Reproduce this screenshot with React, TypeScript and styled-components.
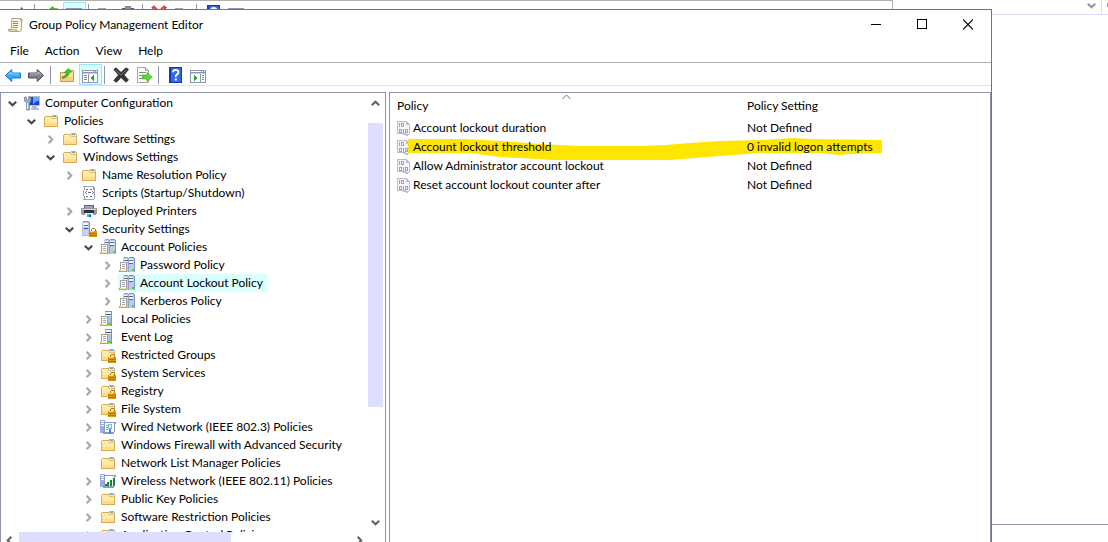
import React from "react";
import styled, { createGlobalStyle, css } from "styled-components";

const colors = {
  accent: "#1090f0",
  frame: "#9292b2",
  beige: "#b2b2aa",
  lilac: "#dedeff",
  select: "#d9ffff",
  marker: "#ffe600",
};

const GlobalStyle = createGlobalStyle`
  *, *::before, *::after { box-sizing: border-box; }
  body {
    margin: 0;
    background: #fff;
    color: #000;
    font: 12px/18px Lato, "Open Sans", sans-serif;
  }
  button { font: inherit; color: inherit; border: 0; padding: 0; background: none; }
  ul { list-style: none; margin: 0; padding: 0; }
  svg { display: block; flex: none; }
`;

/* ---------- layout ---------- */

const Desktop = styled.div`
  display: grid;
  grid-template-columns: minmax(0, 1fr) 116px;
  height: 100vh;
  overflow: hidden;
`;

const Stack = styled.div`
  display: flex;
  flex-direction: column;
  min-width: 0;
  min-height: 0;
`;

const BackStrip = styled.div`
  flex: none;
  height: 9px;
  overflow: hidden;
  margin-right: 99px;
  border-top: 1px solid ${colors.beige};
  border-right: 1px solid ${colors.beige};
`;

const Window = styled.main`
  flex: 1;
  display: flex;
  flex-direction: column;
  min-height: 0;
  margin-bottom: -7px;
  background: #fff;
  border-top: 1px solid ${colors.accent};
  border-right: 1px solid ${colors.accent};
`;

const TitleBar = styled.header`
  display: flex;
  align-items: center;
  height: 29px;
  padding-left: 8px;
`;

const Title = styled.h1`
  flex: 1;
  margin: 0 0 0 5px;
  font-size: 12px;
  font-weight: 400;
`;

const CaptionButton = styled.button`
  display: grid;
  place-items: center;
  width: 46px;
  height: 29px;
`;

const MenuBar = styled.nav`
  display: flex;
  gap: 16px;
  height: 24px;
  padding: 2px 10px 0;
  border-bottom: 1px solid ${colors.beige};
`;

const MenuButton = styled.button`
  height: 20px;
`;

const Toolbar = styled.div<{ $behind?: boolean }>`
  display: flex;
  height: 23px;
  padding: 1px 0 0 2px;
  border-bottom: 1px solid ${colors.lilac};
  ${(p) =>
    p.$behind &&
    css`
      padding-left: 9px;
      border: 0;
    `}
`;

const ToolButton = styled.button<{ $active?: boolean }>`
  display: flex;
  width: 23px;
  height: 21px;
  padding: 2px;
  border: 1px solid ${(p) => (p.$active ? "#99e6ff" : "transparent")};
  background: ${(p) => (p.$active ? colors.select : "transparent")};
`;

const Separator = styled.span`
  width: 8px;
  height: 20px;
  padding: 2px 0 0 2px;
  &::before {
    content: "";
    display: block;
    width: 1px;
    height: 100%;
    background: ${colors.frame};
  }
`;

const Panes = styled.div`
  flex: 1;
  display: grid;
  grid-template-columns: 386px minmax(0, 1fr);
  gap: 3px;
  min-height: 0;
  padding-top: 6px;
`;

const Pane = styled.section`
  min-width: 0;
  min-height: 0;
  border: 1px solid ${colors.frame};
  border-bottom: 0;
`;

const TreePane = styled(Pane)`
  display: grid;
  grid-template-columns: minmax(0, 1fr) 17px;
  grid-template-rows: minmax(0, 1fr) 17px;
`;

const TreeView = styled.div`
  overflow: hidden;
  padding: 1px 0 0 4px;
`;

const Branch = styled.ul`
  & & {
    padding-left: 19px;
  }
`;

const TreeRow = styled.div`
  display: flex;
  align-items: center;
  gap: 2px;
  height: 18px;
  white-space: nowrap;
`;

const Expander = styled.button`
  display: flex;
  width: 16px;
  height: 18px;
  padding: 5px 0 0 3px;
`;

const NodeLabel = styled.span<{ $selected?: boolean }>`
  display: flex;
  align-items: center;
  gap: 5px;
  height: 18px;
  padding: 0 4px 0 1px;
  background: ${(p) => (p.$selected ? colors.select : "transparent")};
`;

const VScroll = styled.div`
  display: flex;
  flex-direction: column;
  justify-content: space-between;
`;

const HScroll = styled.div`
  display: flex;
  justify-content: space-between;
`;

const ScrollButton = styled.button`
  display: flex;
  flex: none;
  width: 17px;
  height: 20px;
  padding: 6px 0 0 3px;
`;

const HScrollButton = styled(ScrollButton)`
  height: 17px;
  padding: 4px 0 0 4px;
`;

const VTrack = styled.div`
  flex: 1;
  padding: 10px 2px 0 0;
`;

const VThumb = styled.div`
  height: 73%;
  background: ${colors.lilac};
`;

const HTrack = styled.div`
  flex: 1;
  padding-left: 1px;
`;

const HThumb = styled.div`
  width: 64%;
  height: 17px;
  background: ${colors.lilac};
`;

const ListPane = styled(Pane)`
  position: relative;
`;

const SortMark = styled.span`
  position: absolute;
  top: 1px;
  left: 172px;
`;

const PolicyTable = styled.table`
  width: 100%;
  border-collapse: collapse;
  table-layout: fixed;

  th,
  td {
    padding: 0 0 0 7px;
    text-align: left;
    font-weight: 400;
    white-space: nowrap;
  }
  th {
    height: 25px;
  }
  td {
    height: 19px;
  }
  th:first-child {
    width: 350px;
  }
`;

const PolicyName = styled.span`
  position: relative;
  display: flex;
  align-items: center;
  gap: 2px;
  height: 19px;
`;

const CellText = styled.span`
  position: relative;
`;

const Marker = styled.svg`
  position: absolute;
  top: 0;
  left: 11px;
`;

const SideTop = styled.div`
  display: flex;
  flex: none;
  height: 15px;
  border-bottom: 1px solid ${colors.lilac};
`;

const SideDrop = styled.button`
  display: flex;
  justify-content: flex-end;
  flex: 1;
  padding: 1px 5px 0 0;
  border-right: 1px solid ${colors.lilac};
`;

const SideEdge = styled.span`
  width: 6px;
  padding: 3px 0 0 5px;
  &::before {
    content: "";
    display: block;
    height: 4px;
    background: ${colors.frame};
  }
`;

const SideBody = styled.div`
  flex: 1;
  margin-bottom: 17px;
  border-bottom: 1px solid ${colors.frame};
`;

/* ---------- icons ---------- */

type IconProps = { children: React.ReactNode; crisp?: boolean };
const Icon = ({ children, crisp = true }: IconProps) => (
  <svg width="16" height="16" viewBox="0 0 16 16" aria-hidden="true" shapeRendering={crisp ? "crispEdges" : "auto"}>
    {children}
  </svg>
);

type Dir = "down" | "right" | "left" | "up";
const angles: Record<Dir, number> = { down: 0, left: 90, up: 180, right: 270 };
const Chevron = ({ dir, color }: { dir: Dir; color: string }) => (
  <svg width="9" height="9" viewBox="0 0 9 9" aria-hidden="true">
    <path d="M.8 2.700 4.500 6.200 8.200 2.700" fill="none" stroke={color} strokeWidth="2.200" transform={`rotate(${angles[dir]} 4.500 4.500)`} />
  </svg>
);

const folderShape = (
  <>
    <path d="M1 4h1V3h7V2h5v1h1v11H1z" fill="#dcab50" />
    <path d="M2 5h7V3h5v10H2z" fill="#ffeaa8" />
    <path d="M2 4h6v1H2z" fill="#fff4cc" />
    <path d="M10 3h3v1h-3z" fill="#5aa0e0" />
    <path d="M9 5h5v1H9z" fill="#e8bf62" />
    <path d="M2 10h12v3H2z" fill="#ffdc8c" />
  </>
);

const lockShape = (
  <>
    <path d="M10 10V8h1V7h3v1h1v2h-1V8h-3v2z" fill="#a87a28" />
    <path d="M8 10h8v6H8z" fill="#e09a10" />
    <path d="M8 12h8v1H8zM8 14h8v1H8z" fill="#b87400" />
    <path d="M9 10h4v1H9z" fill="#ffd860" />
  </>
);

const serverShape = (
  <>
    <path d="M1 1h7v14H1z" fill="#b4c4e4" />
    <path d="M2 0h6v1H2zM8 1h1v14H8z" fill="#8296c4" />
    <path d="M2 2h5v2H2zM2 5h5v1H2z" fill="#f0f6ff" />
    <path d="M3 4h4v1H3zM3 7h4v1H3z" fill="#566890" />
    <path d="M2 9h5v5H2z" fill="#c6d6f2" />
  </>
);

const FolderIcon = () => <Icon>{folderShape}</Icon>;

const LockedFolderIcon = () => (
  <Icon>
    {folderShape}
    {lockShape}
  </Icon>
);

const LockedServerIcon = () => (
  <Icon>
    {serverShape}
    {lockShape}
  </Icon>
);

const paperShape = (
  <>
    <path d="M1 5h7v10H0v-2h1z" fill="#a8a090" />
    <path d="M2 6h5v7H2z" fill="#fffdf4" />
    <path d="M3 7h3v1H3zM3 9h3v1H3zM3 11h3v1H3z" fill="#9aa0c0" />
    <path d="M1 13h6v1H1z" fill="#ffe9a0" />
  </>
);

const PoliciesIcon = () => (
  <Icon>
    <path d="M4 1h5v14H4z" fill="#bccbe8" />
    <path d="M5 0h4v1H5zM9 1h1v14H9z" fill="#90a2cc" />
    <path d="M5 3h4v1H5z" fill="#566890" />
    <path d="M5 2h3v1H5zM5 4h3v1H5z" fill="#f4f8ff" />
    <path d="M10 1h5v14h-5z" fill="#bccbe8" />
    <path d="M10 0h5v1h-5zM15 1h1v14h-1z" fill="#8296c4" />
    <path d="M10 3h4v1h-4zM10 6h4v1h-4z" fill="#566890" />
    <path d="M10 2h4v1h-4zM10 4h4v2h-4z" fill="#f4f8ff" />
    <path d="M13 12h2v2h-2z" fill="#50d820" />
    {paperShape}
  </Icon>
);

const ServerPaperIcon = () => (
  <Icon>
    <path d="M5 1h7v14H5z" fill="#b0c0e0" />
    <path d="M5 0h7v1H5zM11 1h1v14h-1z" fill="#7d90be" />
    <path d="M6 1h5v2H6zM6 4h5v1H6z" fill="#f4f8ff" />
    <path d="M6 3h5v1H6z" fill="#47597f" />
    <path d="M8 12h3v2H8z" fill="#50d820" />
    {paperShape}
  </Icon>
);

const ComputerIcon = () => (
  <Icon crisp={false}>
    <path d="M4.500 1.500h11v9h-11z" fill="#1c3fd0" stroke="#b0bccc" />
    <path d="M9 2h6v4c-3 0-5 2-6 4z" fill="#5fa8ff" />
    <path d="M8 11h5v2h2v2H7v-2h1z" fill="#b4bccc" />
    <path d="M.5 2v4l2 2v7h3V8l1.500-2V2H5v3H2.500V2z" fill="#9cb4c8" stroke="#5c7088" strokeWidth=".6" />
    <path d="M3 8h1v6H3z" fill="#e8f4ff" />
  </Icon>
);

const ScriptIcon = () => (
  <Icon>
    <path d="M2 1h11v1h1v12h-1v1H2v-1h1v-3H2V5h1V2H2z" fill="#a0a4b8" />
    <path d="M4 2h8v3h1v9H4v-3H3V5h1z" fill="#fff" />
    <path d="M5 4h2v1H5zM9 4h2v1H9zM4 7h1v1H4zM5 6h1v1H5zM5 8h1v1H5zM7 7h3v1H7zM11 6h1v1h-1zM12 7h1v1h-1zM11 8h1v1h-1zM5 11h2v1H5zM9 11h2v1H9z" fill="#6c7088" />
  </Icon>
);

const PrinterIcon = () => (
  <Icon>
    <path d="M3 2h10v4H3z" fill="#5b6488" />
    <path d="M4 3h8v2H4z" fill="#9aa4c8" />
    <path d="M0 5h16v6h-1v1H1v-1H0z" fill="#98989e" />
    <path d="M1 6h14v1H1z" fill="#d8d8d8" />
    <path d="M3 7h10v3H3z" fill="#30303c" />
    <path d="M4 10h8v5H4z" fill="#eef8ff" />
    <path d="M6 11h4v3H6z" fill="#40b8f0" />
    <path d="M8 12h2v2H8z" fill="#2060a0" />
  </Icon>
);

const WiredIcon = () => (
  <Icon>
    <path d="M0 1h5v13H0z" fill="#9aaedb" />
    <path d="M1 2h3v1H1zM1 4h3v1H1zM1 6h3v1H1z" fill="#fff" />
    <path d="M4 3h12v2h-1v8h-1v2H3v-2h1z" fill="#8a9ac0" />
    <path d="M5 4h9v9H5z" fill="#fff" />
    <path d="M6 6h2v1H6zM6 8h2v1H6zM6 10h2v1H6z" fill="#9aa0b8" />
    <path d="M8 5h4v5H8z" fill="#78b8f0" />
    <path d="M9 6h2v3H9z" fill="#fff3a0" />
    <path d="M9 10h2v5H9z" fill="#3c90d8" />
  </Icon>
);

const WirelessIcon = () => (
  <Icon>
    <path d="M0 1h5v13H0z" fill="#9aaedb" />
    <path d="M1 2h3v1H1zM1 4h3v1H1zM1 6h3v1H1z" fill="#fff" />
    <path d="M4 2h12v2h-1v8h-1v3H3v-2h1z" fill="#8a9ac0" />
    <path d="M5 3h9v10H5z" fill="#fff" />
    <path d="M5 11h2v2H5zM7 9h2v4H7zM10 7h2v6h-2zM13 5h2v8h-2z" fill="#128a34" />
  </Icon>
);

const ScrollIcon = () => (
  <Icon crisp={false}>
    <path d="M4 1.500h8.500q1 0 1 1.500v8.500q0 3-2 3H1.500q-1 0-1-2h2.800z" fill="#fff8e4" stroke="#a89c94" />
    <path d="M12 1.500q2.800.2 2.500 2.500h-2zM.5 12.500h8q0 2 1.500 2H2q-1.300 0-1.500-2z" fill="#e8d49c" stroke="#a89c84" strokeWidth=".7" />
    <path d="M5 4.500h5M5 6.500h5M5 8.500h5M4.500 10.500h5" stroke="#8486a0" />
  </Icon>
);

const ArrowIcon = ({ back, fill, stroke }: { back?: boolean; fill: string; stroke: string }) => (
  <Icon crisp={false}>
    <g transform={back ? undefined : "translate(16 0) scale(-1 1)"}>
      <path d="M.5 8.500 6.800 2.500V6h8.700v5H6.800v3.500z" fill={fill} stroke={stroke} strokeLinejoin="round" />
      <path d="M2.800 8 6 5v2h8" fill="none" stroke="#fff" strokeOpacity=".5" />
    </g>
  </Icon>
);

const UpFolderIcon = () => (
  <Icon crisp={false}>
    <path d="M1.500 5.500h5l1-2h7v11h-13z" fill="#ffdf94" stroke="#c99a45" />
    <path d="M2 10h12v4H2z" fill="#fbcf78" />
    <path d="M3 10q4-.5 4.500-4.500L5.500 5.300 9.500 1.500 12.500 5l-2 .2Q9.500 10 3.800 11.500z" fill="#3cc828" stroke="#1c8a18" strokeWidth=".6" />
  </Icon>
);

const WindowIcon = ({ side }: { side: "left" | "right" }) => (
  <Icon>
    <path d="M0 3h16v13H0z" fill="#9094b4" />
    <path d="M1 4h10v1H1zM1 7h14v8H1z" fill="#fff" />
    <path d="M12 4h1v1h-1zM14 4h1v1h-1z" fill="#fff" />
    <path d="M1 6h14v1H1z" fill="#c8cce0" />
    {side === "left" ? (
      <>
        <path d="M6 7h1v8H6z" fill="#9094b4" />
        <path d="M2 8h3v1H2zM2 10h3v1H2zM2 12h3v1H2z" fill="#4a90d8" />
        <path d="M11 8h1v6h-1v-1h-1v-1H9v-2h1V9h1z" fill="#28a828" />
      </>
    ) : (
      <>
        <path d="M10 7h1v8h-1z" fill="#9094b4" />
        <path d="M12 8h2v1h-2zM12 10h2v1h-2zM12 12h2v1h-2z" fill="#4a90d8" />
        <path d="M4 8h1v1h1v1h1v2H6v1H5v1H4z" fill="#28a828" />
      </>
    )}
  </Icon>
);

const CrossIcon = ({ fill, stroke }: { fill: string; stroke: string }) => (
  <Icon crisp={false}>
    <path d="M.8 2.500 3 .8 8 5.500l5-4.700 2.500 1.700L11 8l4.500 5-2.500 2.300L8 10.500 3.500 15.300.8 13.500 5.500 8z" fill={fill} stroke={stroke} strokeWidth=".7" />
    <path d="M2.500 3 8 8l5-5" fill="none" stroke="#fff" strokeOpacity=".35" />
  </Icon>
);

const ExportIcon = () => (
  <Icon crisp={false}>
    <path d="M1.500.5h8l3 3v12h-11z" fill="#fffdf0" stroke="#a8a894" />
    <path d="M9.500.5v3h3" fill="none" stroke="#a8a894" />
    <path d="M3 5.500h7M3 8.500h4M3 11.500h4" stroke="#8488a0" />
    <path d="M6.500 8H11V5.500l5 4.500-5 4.500V12H6.500z" fill="#58dc30" stroke="#2c9c1c" strokeWidth=".6" />
  </Icon>
);

const HelpIcon = () => (
  <Icon crisp={false}>
    <path d="M2 0h13v16H2z" fill="#1438b0" />
    <path d="M4 1h10v14H4z" fill="#3468e0" />
    <path d="M6 5.200q0-2.200 2.700-2.200t2.800 2.200q0 1.400-1.500 2.200T8.800 10" fill="none" stroke="#fff" strokeWidth="1.800" />
    <path d="M7.800 11.500h2v2h-2z" fill="#fff" />
  </Icon>
);

const PageIcon = () => (
  <Icon>
    <path d="M1 3h8v1h1v1h1v1h1v10H1z" fill="#a0a4b4" />
    <path d="M2 4h6v3h3v8H2z" fill="#fff" />
  </Icon>
);

const ClipboardIcon = () => (
  <Icon>
    <path d="M2 3h12v12H2z" fill="#55524c" />
    <path d="M5 1h6v3H5z" fill="#8c8c94" />
    <path d="M4 5h8v9H4z" fill="#f0f0f0" />
  </Icon>
);

const PolicyIcon = () => (
  <svg width="14" height="16" viewBox="0 0 14 16" aria-hidden="true" shapeRendering="crispEdges">
    <path d="M0 1h10v1h1v1h1v1h1v10h-1v1h-1v1H9v-1H6v-1H0z" fill="#bcbccc" />
    <path d="M1 2h8v3h3v9H9v-1H1z" fill="#f6f6fc" />
    <path d="M2 3h1v4H2zM4 3h3v4H4zM2 9h3v4H2zM6 9h1v4H6zM8 9h3v4H8z" fill="#a2a2b2" />
    <path d="M5 4h1v2H5zM3 10h1v2H3zM9 10h1v2H9z" fill="#f6f6fc" />
  </svg>
);

/* ---------- data ---------- */

type Node = {
  name: string;
  icon: React.ReactNode;
  leaf?: boolean;
  selected?: boolean;
  items?: Node[];
};

const folder = <FolderIcon />;
const locked = <LockedFolderIcon />;
const policies = <PoliciesIcon />;

const tree: Node[] = [
  {
    name: "Computer Configuration",
    icon: <ComputerIcon />,
    items: [
      {
        name: "Policies",
        icon: folder,
        items: [
          { name: "Software Settings", icon: folder },
          {
            name: "Windows Settings",
            icon: folder,
            items: [
              { name: "Name Resolution Policy", icon: folder },
              { name: "Scripts (Startup/Shutdown)", icon: <ScriptIcon />, leaf: true },
              { name: "Deployed Printers", icon: <PrinterIcon /> },
              {
                name: "Security Settings",
                icon: <LockedServerIcon />,
                items: [
                  {
                    name: "Account Policies",
                    icon: policies,
                    items: [
                      { name: "Password Policy", icon: policies },
                      { name: "Account Lockout Policy", icon: policies, selected: true },
                      { name: "Kerberos Policy", icon: policies },
                    ],
                  },
                  { name: "Local Policies", icon: <ServerPaperIcon /> },
                  { name: "Event Log", icon: <ServerPaperIcon /> },
                  { name: "Restricted Groups", icon: locked },
                  { name: "System Services", icon: locked },
                  { name: "Registry", icon: locked },
                  { name: "File System", icon: locked },
                  { name: "Wired Network (IEEE 802.3) Policies", icon: <WiredIcon /> },
                  { name: "Windows Firewall with Advanced Security", icon: folder },
                  { name: "Network List Manager Policies", icon: folder, leaf: true },
                  { name: "Wireless Network (IEEE 802.11) Policies", icon: <WirelessIcon /> },
                  { name: "Public Key Policies", icon: folder },
                  { name: "Software Restriction Policies", icon: folder },
                  { name: "Application Control Policies", icon: folder },
                ],
              },
            ],
          },
        ],
      },
    ],
  },
];

const policyRows = [
  { name: "Account lockout duration", setting: "Not Defined" },
  { name: "Account lockout threshold", setting: "0 invalid logon attempts", marked: true },
  { name: "Allow Administrator account lockout", setting: "Not Defined" },
  { name: "Reset account lockout counter after", setting: "Not Defined" },
];

/* ---------- components ---------- */

const TreeItems = ({ nodes }: { nodes: Node[] }) => (
  <Branch role="group">
    {nodes.map((n) => (
      <li key={n.name} role="treeitem" aria-expanded={n.leaf ? undefined : !!n.items} aria-selected={!!n.selected}>
        <TreeRow>
          <Expander as={n.leaf ? "span" : "button"} aria-label={n.leaf ? undefined : `Toggle ${n.name}`}>
            {!n.leaf && <Chevron dir={n.items ? "down" : "right"} color={n.items ? "#484844" : "#a8a8a4"} />}
          </Expander>
          <NodeLabel $selected={n.selected}>
            {n.icon}
            {n.name}
          </NodeLabel>
        </TreeRow>
        {n.items && <TreeItems nodes={n.items} />}
      </li>
    ))}
  </Branch>
);

const BackToolbar = () => (
  <BackStrip>
    <Toolbar $behind>
      <ToolButton aria-label="Forward"><ArrowIcon fill="#8c8c98" stroke="#55555f" /></ToolButton>
      <Separator />
      <ToolButton aria-label="Up"><UpFolderIcon /></ToolButton>
      <ToolButton aria-label="Tree" $active><WindowIcon side="left" /></ToolButton>
      <Separator />
      <ToolButton aria-label="Copy"><PageIcon /></ToolButton>
      <ToolButton aria-label="Paste"><ClipboardIcon /></ToolButton>
      <Separator />
      <ToolButton aria-label="Remove"><CrossIcon fill="#f04040" stroke="#b02020" /></ToolButton>
      <ToolButton aria-label="Page"><PageIcon /></ToolButton>
      <Separator />
      <ToolButton aria-label="About"><HelpIcon /></ToolButton>
      <ToolButton aria-label="Actions"><WindowIcon side="right" /></ToolButton>
    </Toolbar>
  </BackStrip>
);

export default function App() {
  return (
    <>
      <GlobalStyle />
      <Desktop>
        <Stack>
          <BackToolbar />
          <Window>
            <TitleBar>
              <ScrollIcon />
              <Title>Group Policy Management Editor</Title>
              <CaptionButton aria-label="Minimize">
                <svg width="10" height="11" shapeRendering="crispEdges"><path d="M0 5h10v1H0z" /></svg>
              </CaptionButton>
              <CaptionButton aria-label="Maximize">
                <svg width="10" height="11" shapeRendering="crispEdges"><path d="M.5.5h9v9h-9z" fill="none" stroke="#000" /></svg>
              </CaptionButton>
              <CaptionButton aria-label="Close">
                <svg width="10" height="11"><path d="M0 .5l10 10M10 .5l-10 10" stroke="#000" strokeWidth="1.200" /></svg>
              </CaptionButton>
            </TitleBar>
            <MenuBar>
              {["File", "Action", "View", "Help"].map((m) => (
                <MenuButton key={m}>{m}</MenuButton>
              ))}
            </MenuBar>
            <Toolbar>
              <ToolButton aria-label="Back"><ArrowIcon back fill="#2eaef8" stroke="#1878c8" /></ToolButton>
              <ToolButton aria-label="Forward"><ArrowIcon fill="#80808c" stroke="#50505a" /></ToolButton>
              <Separator />
              <ToolButton aria-label="Up one level"><UpFolderIcon /></ToolButton>
              <ToolButton aria-label="Show tree" $active><WindowIcon side="left" /></ToolButton>
              <Separator />
              <ToolButton aria-label="Delete"><CrossIcon fill="#34343a" stroke="#1c1c20" /></ToolButton>
              <ToolButton aria-label="Export list"><ExportIcon /></ToolButton>
              <Separator />
              <ToolButton aria-label="Help topics"><HelpIcon /></ToolButton>
              <ToolButton aria-label="Show actions"><WindowIcon side="right" /></ToolButton>
            </Toolbar>
            <Panes>
              <TreePane>
                <TreeView role="tree">
                  <TreeItems nodes={tree} />
                </TreeView>
                <VScroll>
                  <ScrollButton aria-label="Scroll up"><Chevron dir="up" color="#666654" /></ScrollButton>
                  <VTrack><VThumb /></VTrack>
                  <ScrollButton aria-label="Scroll down"><Chevron dir="down" color="#666654" /></ScrollButton>
                </VScroll>
                <HScroll>
                  <HScrollButton aria-label="Scroll left"><Chevron dir="left" color="#666654" /></HScrollButton>
                  <HTrack><HThumb /></HTrack>
                  <HScrollButton aria-label="Scroll right"><Chevron dir="right" color="#666654" /></HScrollButton>
                </HScroll>
              </TreePane>
              <ListPane>
                <SortMark>
                  <svg width="9" height="6"><path d="M.5 5 4.500 1l4 4" fill="none" stroke="#6c6c78" /></svg>
                </SortMark>
                <PolicyTable>
                  <thead>
                    <tr>
                      <th scope="col">Policy</th>
                      <th scope="col">Policy Setting</th>
                    </tr>
                  </thead>
                  <tbody>
                    {policyRows.map((r) => (
                      <tr key={r.name}>
                        <td>
                          <PolicyName>
                            {r.marked && (
                              <Marker width="476" height="24" viewBox="0 0 476 24" aria-hidden="true">
                                <path
                                  d="M0 2H57L92 4 132 7 172 9H232L257 8 282 6 312 4 352 3 385 1 402 2 474 3V16L442 17 432 18 410 16H352L312 19 262 23H172L145 23 112 21 92 20 62 16H0z"
                                  fill={colors.marker}
                                />
                              </Marker>
                            )}
                            <PolicyIcon />
                            <CellText>{r.name}</CellText>
                          </PolicyName>
                        </td>
                        <td>
                          <CellText>{r.setting}</CellText>
                        </td>
                      </tr>
                    ))}
                  </tbody>
                </PolicyTable>
              </ListPane>
            </Panes>
          </Window>
        </Stack>
        <Stack>
          <SideTop>
            <SideDrop aria-label="Show more"><Chevron dir="down" color={colors.frame} /></SideDrop>
            <SideEdge />
          </SideTop>
          <SideBody />
        </Stack>
      </Desktop>
    </>
  );
}
